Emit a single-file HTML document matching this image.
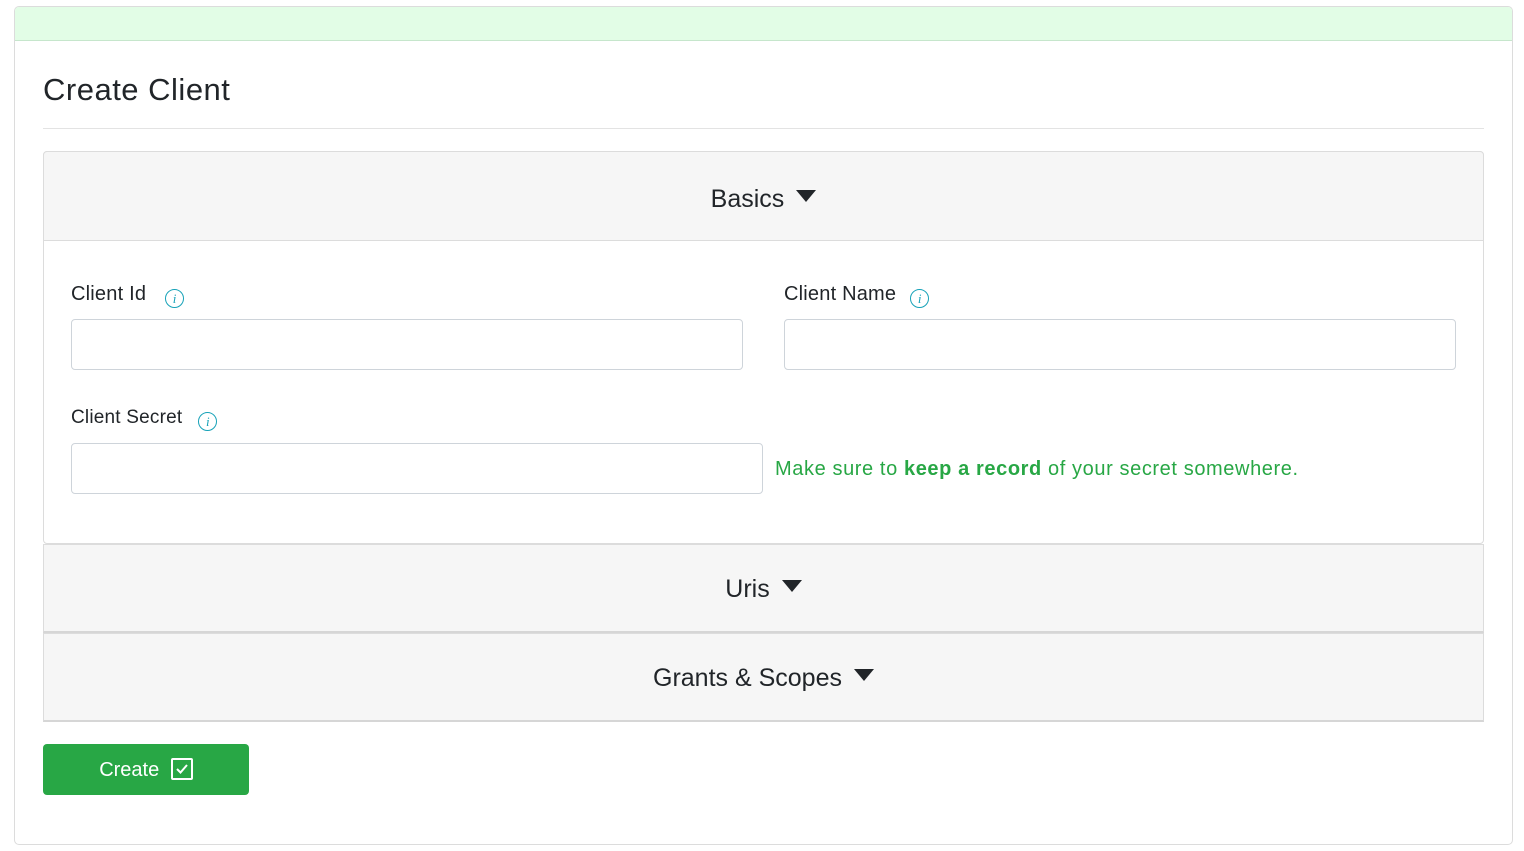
<!DOCTYPE html>
<html><head><meta charset="utf-8"><style>
*{box-sizing:border-box;margin:0;padding:0}
body{width:1524px;height:851px;background:#fff;font-family:"Liberation Sans",sans-serif;color:#212529;position:relative;overflow:hidden}
.a{position:absolute}
.card{left:14px;top:6px;width:1499px;height:839px;border:1px solid #dcdcdc;border-radius:5px;overflow:hidden}
.hdr{left:0;top:0;width:100%;height:34px;background:#e2fde6;border-bottom:1px solid #c6e6cc}
.sec{left:43px;width:1441px;background:#f6f6f6;border:1px solid #dcdcdc;border-bottom:2px solid #d6d6d6;text-align:center;font-size:25px;padding-top:3px}
.tri{display:inline-block;width:0;height:0;border-left:10px solid transparent;border-right:10px solid transparent;border-top:12px solid #212529;margin-left:12px;vertical-align:5px}
.lbl{font-size:20px;color:#212529;letter-spacing:0.2px}
.inp{border:1px solid #ced4da;border-radius:4px;height:51px;background:#fff}
.info{display:inline-block;width:19px;height:19px;border:1.5px solid #17a2b8;border-radius:50%;color:#17a2b8;font:italic 13px "Liberation Serif",serif;text-align:center;line-height:17px;vertical-align:-3px;margin-left:16px}
</style></head><body>
<div class="a card"><div class="a hdr"></div></div>
<div class="a" style="left:43px;top:72px;font-size:31px;letter-spacing:0.5px">Create Client</div>
<div class="a" style="left:43px;top:128px;width:1441px;height:1px;background:#e3e3e3"></div>
<div class="a" style="left:43px;top:151px;width:1441px;height:393px;border:1px solid #dcdcdc;border-radius:4px"></div>
<div class="a sec" style="top:151px;height:90px;line-height:88px;border-bottom:1px solid #dcdcdc;border-radius:4px 4px 0 0">Basics<span class="tri"></span></div>
<div class="a lbl" style="left:71px;top:283px">Client Id<span class="info" style="margin-left:19px">i</span></div>
<div class="a inp" style="left:71px;top:319px;width:672px"></div>
<div class="a lbl" style="left:784px;top:283px">Client Name<span class="info" style="margin-left:14px">i</span></div>
<div class="a inp" style="left:784px;top:319px;width:672px"></div>
<div class="a lbl" style="left:71px;top:407px;font-size:19px">Client Secret<span class="info">i</span></div>
<div class="a inp" style="left:71px;top:443px;width:692px"></div>
<div class="a" style="left:775px;top:458px;font-size:20px;color:#28a745;letter-spacing:0.6px">Make sure to <b>keep a record</b> of your secret somewhere.</div>
<div class="a sec" style="top:544px;height:89px;line-height:82px">Uris<span class="tri"></span></div>
<div class="a sec" style="top:633px;height:89px;line-height:82px">Grants &amp; Scopes<span class="tri"></span></div>
<div class="a" style="left:43px;top:744px;width:206px;height:51px;background:#28a745;border-radius:4px;color:#fff;font-size:20px;line-height:53px;text-align:center">Create <span style="display:inline-block;width:22px;height:22px;border:2px solid #fff;border-radius:2px;vertical-align:-4px;margin-left:6px;position:relative"><svg width="18" height="18" style="position:absolute;left:0;top:0"><path d="M4 9l3.5 3.5L14 5" stroke="#fff" stroke-width="2" fill="none"/></svg></span></div>
</body></html>
